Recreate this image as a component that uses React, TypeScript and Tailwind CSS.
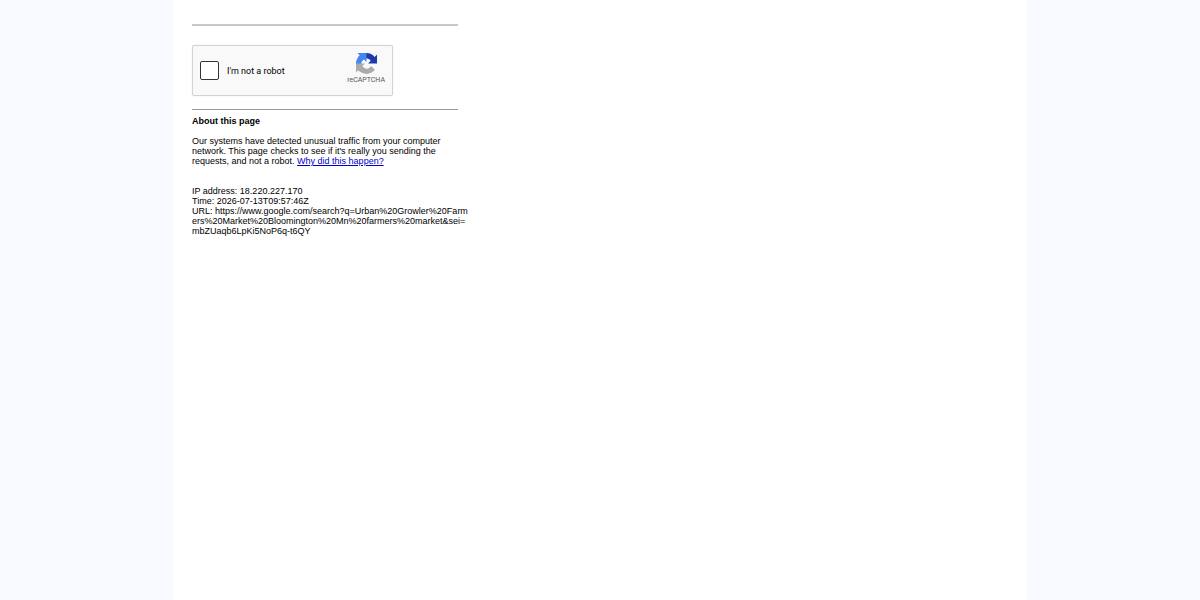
function RecaptchaLogo() {
  return (
    <svg viewBox="0 0 64 64" className="size-[21px]" aria-hidden="true">
      <path
        fill="#1c3aa9"
        d="M64 31.955l-.033-1.37V4.687l-7.16 7.16C50.948 4.674 42.033.093 32.05.093c-10.4 0-19.622 4.96-25.458 12.64l11.736 11.86a15.55 15.55 0 0 1 4.754-5.334c2.05-1.6 4.952-2.906 8.968-2.906.485 0 .86.057 1.135.163 4.976.393 9.288 3.14 11.828 7.124l-8.307 8.307L64 31.953"
      />
      <path
        fill="#4285f4"
        d="M31.862.094l-1.37.033H4.594l7.16 7.16C4.58 13.147 0 22.06 0 32.046c0 10.4 4.96 19.622 12.64 25.458L24.5 45.768a15.55 15.55 0 0 1-5.334-4.754c-1.6-2.05-2.906-4.952-2.906-8.968 0-.485.057-.86.163-1.135.393-4.976 3.14-9.288 7.124-11.828l8.307 8.307L31.86.095"
      />
      <path
        fill="#ababab"
        d="M.001 32.045l.033 1.37v25.898l7.16-7.16c5.86 7.173 14.774 11.754 24.76 11.754 10.4 0 19.622-4.96 25.458-12.64l-11.736-11.86a15.55 15.55 0 0 1-4.754 5.334c-2.05 1.6-4.952 2.906-8.968 2.906-.485 0-.86-.057-1.135-.163-4.976-.393-9.288-3.14-11.828-7.124l8.307-8.307c-10.522.04-22.4.066-27.295-.005"
      />
    </svg>
  );
}

function Captcha() {
  return (
    <div className="flex h-[51px] max-w-[201px] items-center justify-between rounded-xs border border-[#d3d3d3] bg-[#f9f9f9] pr-[7px] pl-[7px] shadow-[0_0_2px_rgba(0,0,0,0.08)]">
      <label className="flex items-center gap-2 font-['Roboto',sans-serif] text-[9px] leading-3 text-black">
        <input
          type="checkbox"
          className="size-[19px] appearance-none rounded-xs border border-[#333] bg-white checked:bg-[#4285f4]"
        />
        I'm not a robot
      </label>
      <div className="flex flex-col items-center pb-[2px]">
        <RecaptchaLogo />
        <span className="font-['Roboto',sans-serif] text-[7px] leading-3 text-[#555]">reCAPTCHA</span>
      </div>
    </div>
  );
}

export default function App() {
  return (
    <div className="min-h-screen bg-[#f8faff]">
      <main className="mx-auto min-h-screen max-w-[854px] bg-white px-[19px] pt-6 font-['Liberation_Sans',Arial,sans-serif] text-[9px] leading-[10px] text-black">
        <div className="max-w-[266px]">
          <hr className="mb-[19px] border-t-2 border-[#c8c8c8]" />
          <Captcha />
          <hr className="mt-[13px] mb-[6px] border-[#999]" />
          <h1 className="font-bold">About this page</h1>
          <p className="mt-[10px]">
            Our systems have detected unusual traffic from your computer network. This page checks to see if it's really
            you sending the requests, and not a robot.{" "}
            <a href="#why" className="text-[#0000cc] underline">
              Why did this happen?
            </a>
          </p>
          <div className="mt-5 whitespace-nowrap">
            <p>IP address: 18.220.227.170</p>
            <p>Time: 2026-07-13T09:57:46Z</p>
            <p>
              URL: https://www.google.com/search?q=Urban%20Growler%20Farm
              <br />
              ers%20Market%20Bloomington%20Mn%20farmers%20market&amp;sei=
              <br />
              mbZUaqb6LpKi5NoP6q-t6QY
            </p>
          </div>
        </div>
      </main>
    </div>
  );
}
